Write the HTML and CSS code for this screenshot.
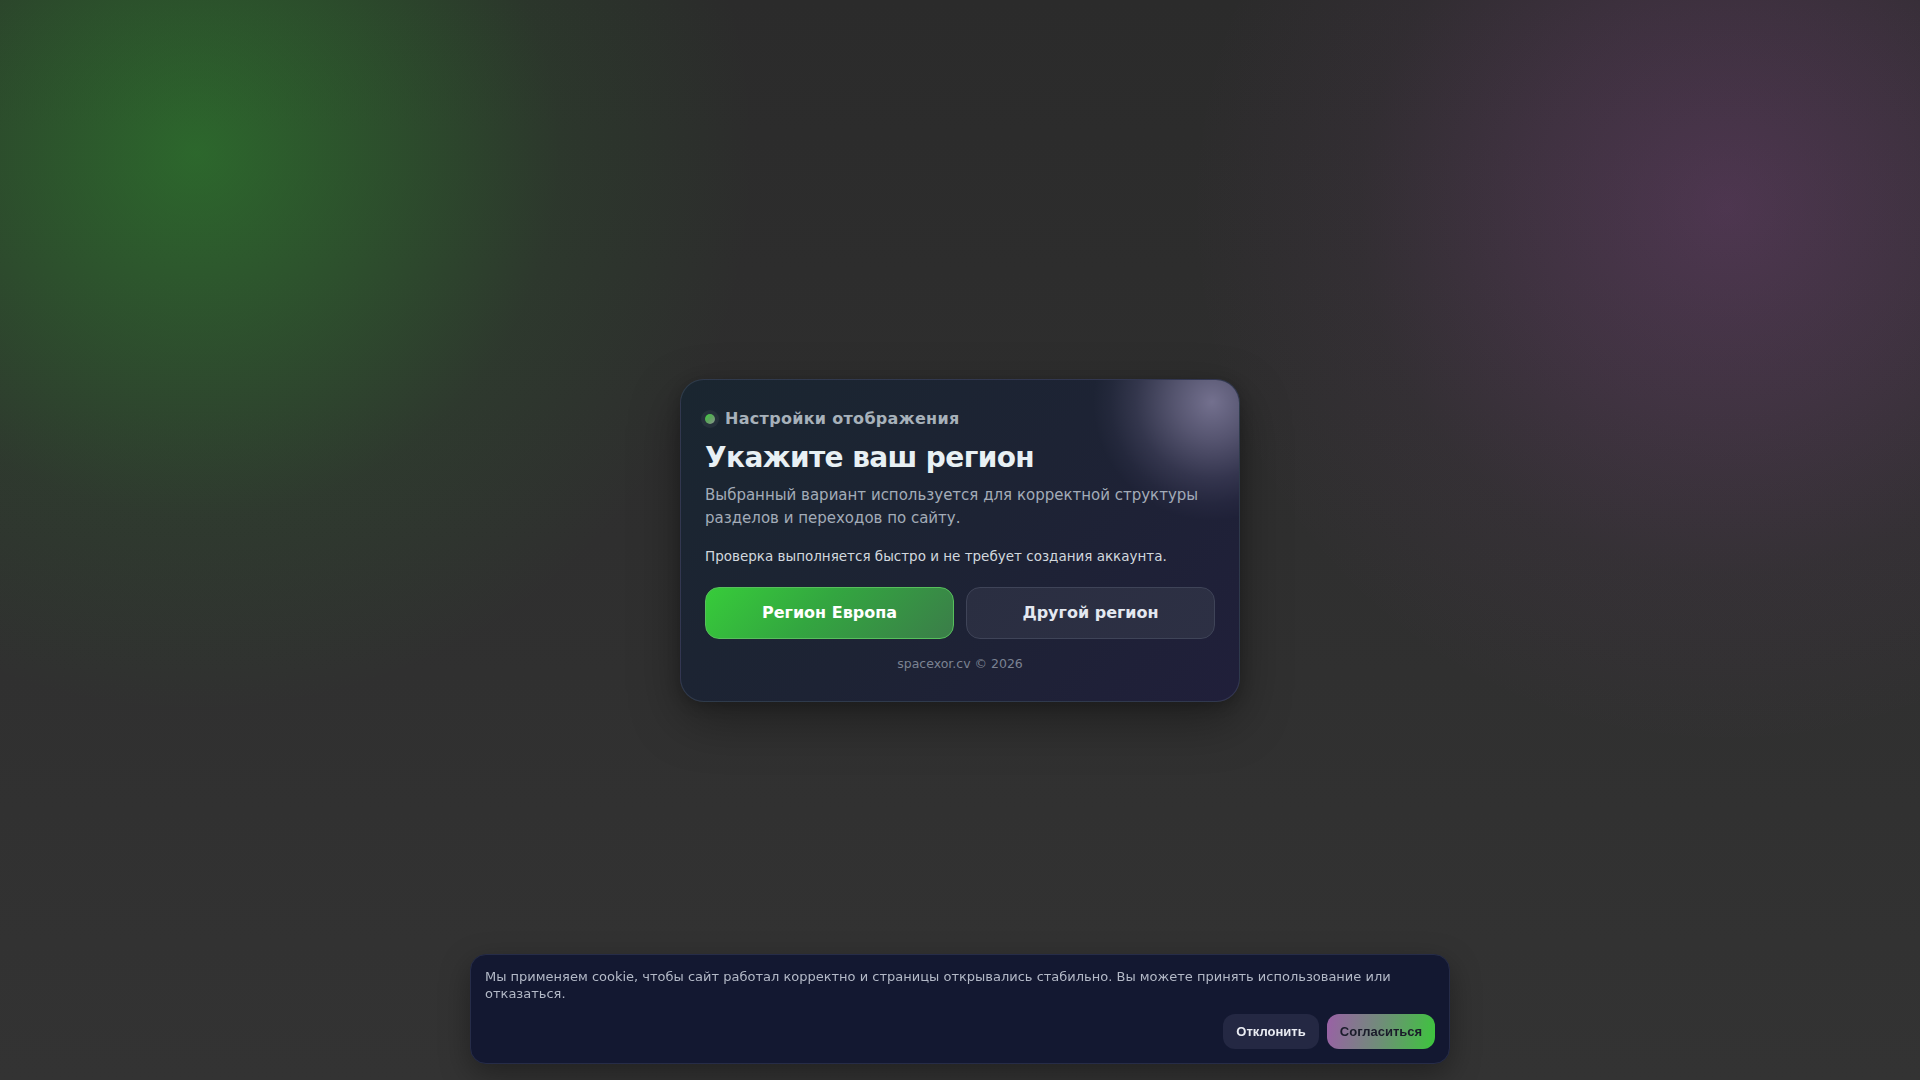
FILE: index.html
```html
<!DOCTYPE html>
<html lang="ru">
<head>
<meta charset="utf-8">
<title>Укажите ваш регион</title>
<link rel="stylesheet" href="styles.css">
</head>
<body>
<main class="stage">
  <section class="card">
    <div class="eyebrow"><span class="dot"></span><span>Настройки отображения</span></div>
    <h1 class="title">Укажите ваш регион</h1>
    <p class="desc">Выбранный вариант используется для корректной структуры разделов и переходов по сайту.</p>
    <p class="note">Проверка выполняется быстро и не требует создания аккаунта.</p>
    <div class="actions">
      <button class="btn btn-primary" type="button">Регион Европа</button>
      <button class="btn btn-secondary" type="button">Другой регион</button>
    </div>
    <div class="foot">spacexor.cv © 2026</div>
  </section>
</main>
<div class="cookie">
  <p class="cookie-text">Мы применяем cookie, чтобы сайт работал корректно и страницы открывались стабильно. Вы можете принять использование или отказаться.</p>
  <div class="cookie-actions">
    <button class="cbtn cbtn-decline" type="button">Отклонить</button>
    <button class="cbtn cbtn-accept" type="button">Согласиться</button>
  </div>
</div>
</body>
</html>
```
FILE: styles.css
```css
* { box-sizing: border-box; }
html, body { margin: 0; padding: 0; height: 100%; }
body {
  font-family: "DejaVu Sans", "Noto Sans", sans-serif;
  background-color: #2e2e2e;
  background-image:
    radial-gradient(circle 560px at 196px 153px, rgba(45, 185, 45, 0.42) 0%, rgba(45, 185, 45, 0.24) 35%, rgba(45, 185, 45, 0.08) 65%, rgba(45, 185, 45, 0) 100%),
    radial-gradient(circle 540px at 1727px 208px, rgba(200, 90, 210, 0.21) 0%, rgba(200, 90, 210, 0.12) 38%, rgba(200, 90, 210, 0.04) 68%, rgba(200, 90, 210, 0) 100%),
    linear-gradient(180deg, #2b2b2b 0%, #2f2f2f 50%, #333333 100%);
  overflow: hidden;
}
.stage {
  height: 100vh;
  display: grid;
  place-items: center;
}
.card {
  position: relative;
  overflow: hidden;
  width: 560px;
  padding: 27px 24px 28px;
  border-radius: 24px;
  border: 1px solid rgba(120, 135, 170, 0.22);
  background: linear-gradient(135deg, #1a2630 0%, #1d2334 50%, #201f3a 100%);
  box-shadow: 0 18px 50px rgba(0, 0, 0, 0.35), 0 4px 14px rgba(0, 0, 0, 0.2);
}
.card::after {
  content: "";
  position: absolute;
  top: -98px;
  right: -93px;
  width: 240px;
  height: 240px;
  border-radius: 50%;
  background: radial-gradient(circle at 50% 50%, rgba(200, 190, 230, 0.5) 0%, rgba(185, 175, 215, 0.36) 22%, rgba(165, 155, 200, 0.16) 45%, rgba(150, 140, 190, 0.05) 60%, rgba(150, 140, 190, 0) 70%);
  pointer-events: none;
}
.eyebrow {
  display: flex;
  align-items: center;
  gap: 10px;
  font-size: 16px;
  font-weight: 700;
  line-height: 24px;
  color: #a7b1ba;
  letter-spacing: 0.3px;
}
.dot {
  width: 10px;
  height: 10px;
  flex: 0 0 10px;
  border-radius: 50%;
  background: linear-gradient(135deg, #3fcf3f 0%, #5aa65a 45%, #8c9490 100%);
  box-shadow: 0 0 0 4px rgba(255, 255, 255, 0.05);
}
.title {
  margin: 10px 0 0;
  font-size: 28px;
  line-height: 1.2;
  font-weight: 700;
  letter-spacing: -0.6px;
  color: #e8f0f4;
}
.desc {
  margin: 10px 0 0;
  font-size: 15px;
  line-height: 23.2px;
  color: #a3acb8;
}
.note {
  margin: 15px 0 0;
  font-size: 13.5px;
  line-height: 21px;
  color: #d2d8de;
}
.actions {
  margin-top: 20px;
  display: grid;
  grid-template-columns: 1fr 1fr;
  gap: 12px;
}
.btn {
  font-family: "DejaVu Sans", "Noto Sans", sans-serif;
  font-size: 16px;
  font-weight: 700;
  line-height: 20px;
  padding: 15px 12px;
  border-radius: 14px;
  cursor: pointer;
}
.btn-primary {
  color: #ffffff;
  border: 1px solid #57bf5c;
  background: linear-gradient(135deg, #37cc3a 0%, #33a640 45%, #3b7d49 100%);
}
.btn-secondary {
  color: #e4e8f0;
  border: 1px solid #3f4458;
  background: linear-gradient(135deg, #2a2e41 0%, #2d3044 100%);
}
.foot {
  margin-top: 16px;
  text-align: center;
  font-size: 12.5px;
  line-height: 18px;
  color: #7b8292;
}
.cookie {
  position: fixed;
  left: 50%;
  bottom: 16px;
  transform: translateX(-50%);
  width: 980px;
  padding: 14px;
  border-radius: 16px;
  border: 1px solid #262c48;
  background: #131831;
  box-shadow: 0 10px 30px rgba(0, 0, 0, 0.35);
  display: flex;
  flex-direction: column;
  gap: 11px;
}
.cookie-text {
  margin: 0;
  font-size: 13px;
  line-height: 16.9px;
  color: #b3b9c7;
}
.cookie-actions {
  display: flex;
  justify-content: flex-end;
  gap: 8px;
}
.cbtn {
  font-family: "Liberation Sans", Arial, sans-serif;
  font-size: 13px;
  font-weight: 700;
  line-height: 15px;
  padding: 10px 12px;
  border: 0;
  border-radius: 12px;
  cursor: pointer;
}
.cbtn-decline {
  width: 96px;
  background: #242843;
  color: #e9ebf2;
}
.cbtn-accept {
  width: 108px;
  background: linear-gradient(100deg, #9a60a6 0%, #6f8e78 50%, #3cc63c 100%);
  color: #1a1c2a;
}
```
